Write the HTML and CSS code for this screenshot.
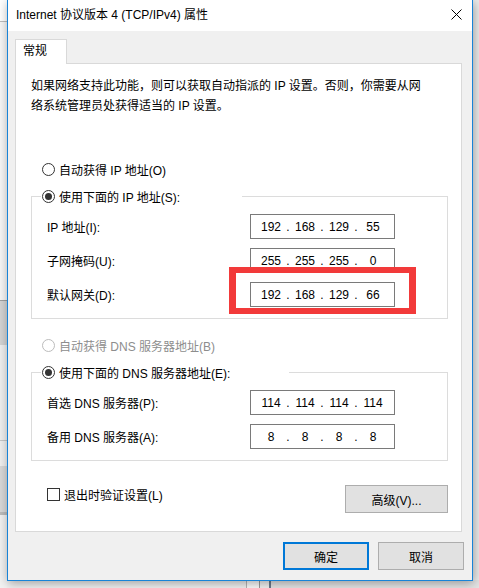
FILE: index.html
```html
<!DOCTYPE html>
<html lang="zh-CN">
<head>
  <meta charset="UTF-8" />
  <title>Internet 协议版本 4 (TCP/IPv4) 属性</title>
  <link rel="stylesheet" href="styles.css">
</head>
<body>

  <div class="dialog">
    <!-- Title bar -->
    <div class="titlebar">
      <span class="title">Internet 协议版本 4 (TCP/IPv4) 属性</span>
      <span class="close-icon">
        <svg width="11" height="11" viewBox="0 0 11 11"><path d="M0.5 0.5 L10.5 10.5 M10.5 0.5 L0.5 10.5" stroke="#000" stroke-width="1" fill="none"/></svg>
      </span>
    </div>

    <div class="body">
      <div class="tabs"><div class="tab">常规</div></div>

      <div class="panel">
        <p class="intro">如果网络支持此功能，则可以获取自动指派的 IP 设置。否则，你需要从网<br>络系统管理员处获得适当的 IP 设置。</p>

        <!-- IP address -->
        <div class="option"><span class="radio"></span>自动获得 IP 地址(O)</div>
        <fieldset class="group">
          <legend class="legend-ip"><span class="radio checked"></span>使用下面的 IP 地址(S):</legend>
          <div class="row">
            <span class="label">IP 地址(I):</span>
            <div class="ip"><span class="oct">192</span><span class="dot">.</span><span class="oct">168</span><span class="dot">.</span><span class="oct">129</span><span class="dot">.</span><span class="oct">55</span></div>
          </div>
          <div class="row">
            <span class="label">子网掩码(U):</span>
            <div class="ip"><span class="oct">255</span><span class="dot">.</span><span class="oct">255</span><span class="dot">.</span><span class="oct">255</span><span class="dot">.</span><span class="oct">0</span></div>
          </div>
          <div class="row">
            <span class="label">默认网关(D):</span>
            <div class="ip marked"><span class="oct">192</span><span class="dot">.</span><span class="oct">168</span><span class="dot">.</span><span class="oct">129</span><span class="dot">.</span><span class="oct">66</span></div>
          </div>
        </fieldset>

        <!-- DNS -->
        <div class="option disabled"><span class="radio"></span>自动获得 DNS 服务器地址(B)</div>
        <fieldset class="group">
          <legend class="legend-dns"><span class="radio checked"></span>使用下面的 DNS 服务器地址(E):</legend>
          <div class="row">
            <span class="label">首选 DNS 服务器(P):</span>
            <div class="ip"><span class="oct">114</span><span class="dot">.</span><span class="oct">114</span><span class="dot">.</span><span class="oct">114</span><span class="dot">.</span><span class="oct">114</span></div>
          </div>
          <div class="row">
            <span class="label">备用 DNS 服务器(A):</span>
            <div class="ip"><span class="oct">8</span><span class="dot">.</span><span class="oct">8</span><span class="dot">.</span><span class="oct">8</span><span class="dot">.</span><span class="oct">8</span></div>
          </div>
        </fieldset>

        <div class="panel-footer">
          <div class="check-line"><span class="checkbox"></span>退出时验证设置(L)</div>
          <button class="btn advanced">高级(V)...</button>
        </div>
      </div>

      <div class="footer">
        <button class="btn default">确定</button>
        <button class="btn">取消</button>
      </div>
    </div>
  </div>

</body>
</html>
```

FILE: styles.css
```css
body {
  margin: 0;
  width: 479px;
  height: 588px;
  overflow: hidden;
  font-family: "Liberation Sans", "Noto Sans CJK SC", sans-serif;
  font-size: 12px;
  color: #000;
  background-color: #ececec;
  /* window lying behind the dialog */
  background-image:
    linear-gradient(to bottom, #fff 0 21px, #bdbdbd 21px 22px, #f7f7f7 22px 300px, #a0a0a0 300px 301px, #d4d4d4 301px 345px, #f0f0f0 345px 440px, #c8c8c8 440px 441px, #f0f0f0 441px 466px, #d9d9d9 466px 512px, #bcbcbc 512px 515px, #f2f2f2 515px),
    linear-gradient(to right, #f0f0f0 0 246px, #b5b5b5 246px 247px, #fafafa 247px 259px, #9a9a9a 259px 260px, #f0f0f0 260px 269px, #6b7a8a 269px 271px, #e4e4e4 271px);
  background-size: 7px 100%, 100% 8px;
  background-position: left top, left bottom;
  background-repeat: no-repeat;
}

.dialog {
  margin-left: 7px;
  width: 466px;
  height: 581px;
  box-sizing: border-box;
  border: 1px solid #1883d7;
  border-top: none;
  background: #f0f0f0;
  box-shadow: 1px 2px 10px rgba(0, 0, 0, 0.35);
  display: flex;
  flex-direction: column;
}

/* Title bar */
.titlebar {
  height: 32px;
  background: #fff;
  display: flex;
  align-items: center;
  justify-content: space-between;
  padding-left: 8px;
  padding-right: 10px;
}

.title {
  line-height: 20px;
  margin-top: -1px;
}

.close-icon {
  display: flex;
  margin-top: -2px;
}

.body {
  padding: 8px 8px 10px 7px;
  display: flex;
  flex-direction: column;
}

/* Tab */
.tabs {
  display: flex;
}

.tab {
  width: 52px;
  height: 25px;
  box-sizing: border-box;
  border: 1px solid #d9d9d9;
  border-bottom: none;
  background: #fff;
  padding-left: 7px;
  line-height: 23px;
  margin-bottom: -1px;
  position: relative;
  z-index: 1;
}

.panel {
  width: 447px;
  box-sizing: border-box;
  border: 1px solid #d9d9d9;
  background: #fff;
  padding: 0 13px 18px 15px;
}

.intro {
  margin: 12px 0 0;
  line-height: 20px;
  white-space: nowrap;
}

/* Radios and checkbox */
.option {
  display: flex;
  align-items: center;
  height: 20px;
  margin-left: 11px;
}

.option:first-of-type {
  margin-top: 43px;
}

.option.disabled {
  margin-top: 16px;
  color: #8d8d8d;
}

.radio {
  width: 13px;
  height: 13px;
  box-sizing: border-box;
  border: 1px solid #333;
  border-radius: 50%;
  background: #fff;
  margin-right: 4px;
  display: flex;
  align-items: center;
  justify-content: center;
  flex: none;
}

.radio.checked::after {
  content: "";
  width: 7px;
  height: 7px;
  border-radius: 50%;
  background: #333;
}

.option.disabled .radio {
  border-color: #bcbcbc;
}

.checkbox {
  width: 13px;
  height: 13px;
  box-sizing: border-box;
  border: 1px solid #333;
  background: #fff;
  margin-right: 4px;
  flex: none;
}

/* Group boxes */
.group {
  margin: 7px 0 0;
  padding: 8px 0 11px 9px;
  width: 417px;
  box-sizing: border-box;
  border: 1px solid #dcdcdc;
  display: flex;
  flex-direction: column;
  gap: 9px;
}

.group legend {
  padding: 0 0 0 1px;
  height: 20px;
  display: flex;
  align-items: center;
  box-sizing: border-box;
}

.legend-ip {
  width: 201px;
}

.legend-dns {
  width: 248px;
}

.row {
  display: flex;
  align-items: center;
  height: 25px;
  padding-left: 6px;
}

.label {
  width: 203px;
  flex: none;
}

.ip {
  position: relative;
  width: 145px;
  height: 25px;
  box-sizing: border-box;
  border: 1px solid #7a7a7a;
  display: flex;
  align-items: center;
  padding-left: 6px;
}

.oct {
  width: 28px;
  text-align: center;
}

.dot {
  width: 6px;
  text-align: center;
}

/* red highlight drawn over the gateway field */
.ip.marked::after {
  content: "";
  position: absolute;
  left: -22px;
  top: -16px;
  width: 187px;
  height: 47px;
  box-sizing: border-box;
  border: 6px solid #f23a3a;
  border-left-width: 7px;
  border-right-width: 7px;
}

.panel-footer {
  margin-top: 24px;
  display: flex;
  justify-content: space-between;
  align-items: flex-start;
  padding-left: 16px;
}

.check-line {
  display: flex;
  align-items: center;
  height: 20px;
  margin-top: -1px;
}

/* Buttons */
.btn {
  font-family: inherit;
  font-size: 12px;
  color: #000;
  background: #e1e1e1;
  border: 1px solid #adadad;
  padding: 0;
  width: 86px;
  height: 28px;
}

.btn.advanced {
  width: 103px;
  height: 28px;
}

.btn.default {
  border: 2px solid #0078d7;
}

.footer {
  margin-top: 10px;
  display: flex;
  justify-content: flex-end;
  gap: 9px;
}
```
